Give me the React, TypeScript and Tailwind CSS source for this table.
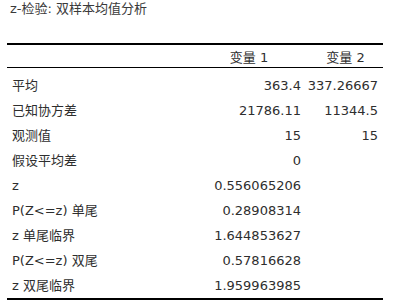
import type React from "react";

interface Row {
  label: string;
  v1: string;
  v2: string;
}

const rows: Row[] = [
  { label: "平均", v1: "363.4", v2: "337.26667" },
  { label: "已知协方差", v1: "21786.11", v2: "11344.5" },
  { label: "观测值", v1: "15", v2: "15" },
  { label: "假设平均差", v1: "0", v2: "" },
  { label: "z", v1: "0.556065206", v2: "" },
  { label: "P(Z<=z) 单尾", v1: "0.28908314", v2: "" },
  { label: "z 单尾临界", v1: "1.644853627", v2: "" },
  { label: "P(Z<=z) 双尾", v1: "0.57816628", v2: "" },
  { label: "z 双尾临界", v1: "1.959963985", v2: "" },
];

const font = {
  fontFamily: '"DejaVu Sans", "Noto Sans CJK SC", sans-serif',
};

const App: React.FC = () => {
  return (
    <div className="w-[398px] h-[304px] bg-white text-[#2e2e2e] overflow-hidden" style={font}>
      {/* Title */}
      <div className="pl-[10px] pt-px h-[43px] text-[13px] leading-[15px] text-[#3a3a3a]">
        z-检验: 双样本均值分析
      </div>

      <div className="ml-[7px] w-[376px]">
        {/* Header */}
        <div className="flex h-[25px] border-t-2 border-b border-black text-[13px] items-center pt-[3px]">
          <div className="w-[189px]"></div>
          <div className="w-[106px] text-center">变量 1</div>
          <div className="flex-1 text-center pl-[6px]">变量 2</div>
        </div>

        {/* Body */}
        <div className="pt-[5px] border-b-2 border-black">
          {rows.map((r) => (
            <div key={r.label} className="flex h-[25px] items-center text-[13px]">
              <div className="w-[189px] pl-[5px]">{r.label}</div>
              <div className="w-[106px] text-right pr-px">{r.v1}</div>
              <div className="flex-1 text-right pr-[5px]">{r.v2}</div>
            </div>
          ))}
        </div>
      </div>
    </div>
  );
};

export default App;
